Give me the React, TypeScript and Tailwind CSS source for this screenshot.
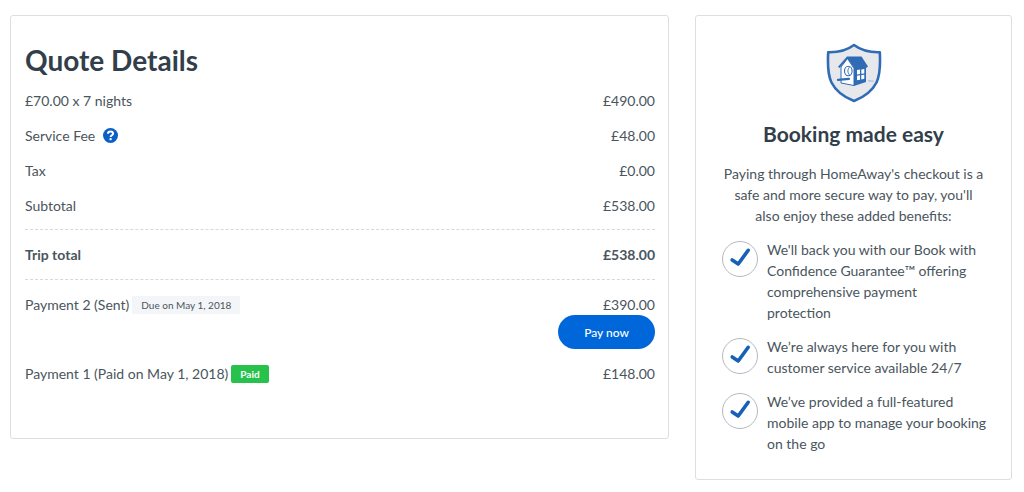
import type { ReactNode } from "react";

function Row({ label, amount, strong }: { label: ReactNode; amount: string; strong?: boolean }) {
  return (
    <div className={strong ? "flex justify-between py-[14px] font-bold" : "flex justify-between py-[7px]"}>
      <dt className="flex items-center">{label}</dt>
      <dd>{amount}</dd>
    </div>
  );
}

function HelpIcon() {
  return (
    <svg viewBox="0 0 16 16" className="size-[15px]" aria-hidden="true">
      <circle cx="8" cy="8" r="8" fill="#0b5fc6" />
      <path
        d="M5.300 6.200C5.300 4.700 6.500 3.700 8 3.700s2.700.9 2.700 2.300c0 1.700-2.600 1.800-2.600 3.700"
        fill="none"
        stroke="#fff"
        strokeWidth="2.100"
      />
      <rect x="7" y="10.800" width="2.200" height="2.200" fill="#fff" />
    </svg>
  );
}

function ShieldLogo() {
  return (
    <svg viewBox="0 0 56 60" className="h-[60px] w-[56px]" aria-hidden="true">
      <path
        d="M28 2C22 6.500 12 9.500 2.200 9.200C1.600 20 1.400 31 5.500 39.500C10 48.500 19 54.500 28 58C37 54.500 46 48.500 50.500 39.500C54.600 31 54.400 20 53.800 9.200C44 9.500 34 6.500 28 2Z"
        fill="#e6e8ec"
        stroke="#2f6cb5"
        strokeWidth="2.600"
        strokeLinejoin="round"
      />
      <path d="M15 24L21.500 15.500L28 25.500V42.500L15 40Z" fill="#fff" stroke="#2f6cb5" strokeWidth="1" />
      <path d="M28 23H40V39L28 43Z" fill="#2f6cb5" />
      <path d="M12 23.800L21 13.500H35.500L42 23.500L40.500 24.800H28L21.500 15.800L13.500 25Z" fill="#2f6cb5" />
      <ellipse cx="22.300" cy="28" rx="3.800" ry="4.800" fill="#fff" stroke="#2f6cb5" strokeWidth="1.100" />
      <path d="M23.700 24C21.300 26 21.300 30 23.700 32" fill="none" stroke="#2f6cb5" strokeWidth="0.900" />
      <path d="M12 36.800L23 35.800" stroke="#2f6cb5" strokeWidth="2.200" strokeLinecap="round" />
      <path d="M31 27L34 26.600V31L31 31.400ZM35.300 26.400L38.300 26V30.400L35.300 30.800ZM31 32.700L34 32.300V36.700L31 37.300ZM35.300 32.100L38.300 31.700V35.800L35.300 36.400Z" fill="#fff" />
      <path d="M42.500 37.500H44.200M43.300 37.500V39M45 39V37.500L46 38.500L47 37.500V39" fill="none" stroke="#8ba9d0" strokeWidth="0.600" />
    </svg>
  );
}

function CheckBadge() {
  return (
    <svg viewBox="0 0 36 36" className="mt-[2px] size-9 shrink-0" aria-hidden="true">
      <circle cx="18" cy="18" r="17.500" fill="#fff" stroke="#b3b9c1" />
      <path d="M10.200 19L16.200 23L26.200 9.300" fill="none" stroke="#1660b8" strokeWidth="3.600" strokeLinecap="round" strokeLinejoin="round" />
    </svg>
  );
}

const benefits = [
  "We'll back you with our Book with Confidence Guarantee™ offering comprehensive payment\nprotection",
  "We’re always here for you with customer service available 24/7",
  "We’ve provided a full-featured mobile app to manage your booking on the go",
];

export default function App() {
  return (
    <main className="grid grid-cols-[659fr_317fr] items-start gap-[26px] bg-white pt-[15px] pr-3 pb-3 pl-[10px] font-['Lato',sans-serif] text-[14px] leading-[21px] text-[#4a555d]">
      <section className="rounded-[3px] border border-[#dcdfe2] pt-[26px] pr-[13px] pb-[47px] pl-[14px]">
        <h1 className="text-[28px] leading-9 font-bold text-[#323f4b]">Quote Details</h1>
        <dl className="mt-[5px]">
          <Row label="£70.00 x 7 nights" amount="£490.00" />
          <Row
            label={
              <>
                Service Fee
                <button type="button" aria-label="About the service fee" className="ml-2">
                  <HelpIcon />
                </button>
              </>
            }
            amount="£48.00"
          />
          <Row label="Tax" amount="£0.00" />
          <Row label="Subtotal" amount="£538.00" />
          <div className="mt-[6px] border-y border-dashed border-[#d5d8dc]">
            <Row label="Trip total" amount="£538.00" strong />
          </div>
          <div className="flex items-start justify-between pt-[14px]">
            <dt className="flex items-center">
              Payment 2 (Sent)
              <span className="ml-[3px] bg-[#f3f5f8] px-[9px] text-[10px] leading-[18px]">Due on May 1, 2018</span>
            </dt>
            <dd className="flex flex-col items-end">
              £390.00
              <button type="button" className="h-[34px] rounded-full bg-[#0067db] px-[26px] text-[12px] font-medium text-white">
                Pay now
              </button>
            </dd>
          </div>
          <div className="flex items-center justify-between pt-[14px] pb-[7px]">
            <dt className="flex items-center">
              Payment 1 (Paid on May 1, 2018)
              <span className="ml-[3px] rounded-[2px] bg-[#27c24c] px-[9px] text-[10px] leading-[18px] font-bold text-white">Paid</span>
            </dt>
            <dd>£148.00</dd>
          </div>
        </dl>
      </section>

      <aside className="rounded-[3px] border border-[#dcdfe2] pt-[27px] pb-[25px]">
        <div className="flex justify-center">
          <ShieldLogo />
        </div>
        <h2 className="mt-4 text-center text-[21px] leading-[30px] font-bold text-[#323f4b]">Booking made easy</h2>
        <p className="mt-[14px] px-[26px] text-center">
          Paying through HomeAway's checkout is a safe and more secure way to pay, you'll also enjoy these added benefits:
        </p>
        <ul className="mt-[13px] flex flex-col gap-[13px] pr-5 pl-[26px]">
          {benefits.map((text) => (
            <li key={text} className="flex items-start gap-[9px]">
              <CheckBadge />
              <span className="whitespace-pre-line">{text}</span>
            </li>
          ))}
        </ul>
      </aside>
    </main>
  );
}
